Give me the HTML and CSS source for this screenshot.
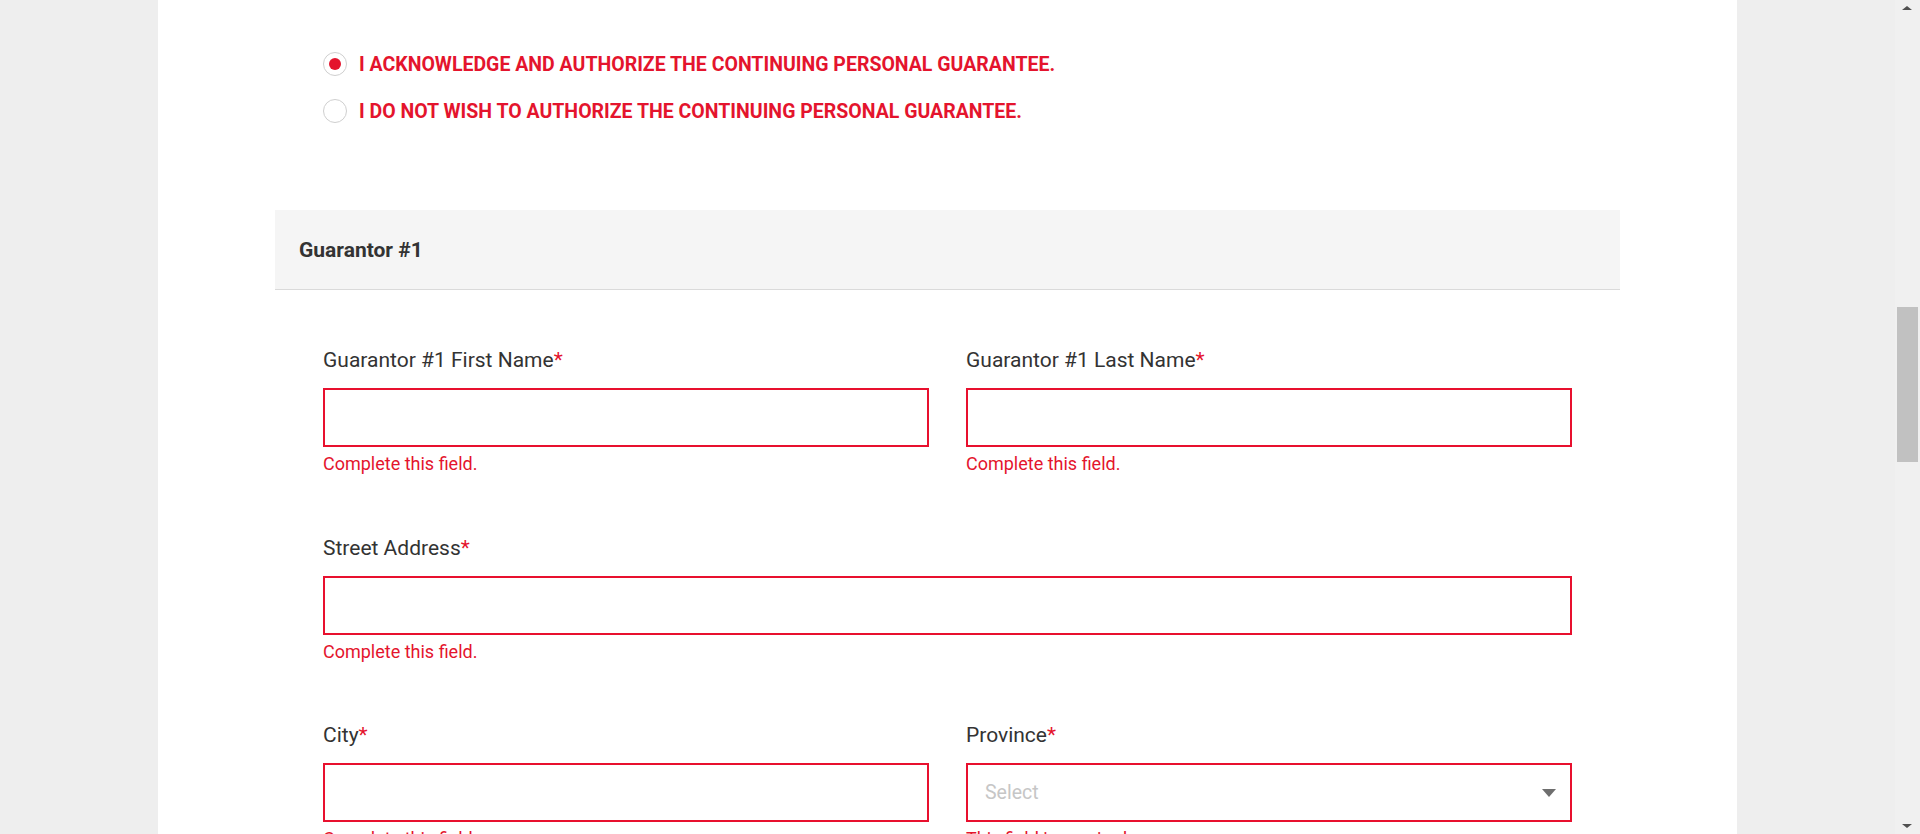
FILE: index.html
```html
<!DOCTYPE html>
<html lang="en">
<head>
<meta charset="utf-8">
<title>Guarantor</title>
<link rel="stylesheet" href="styles.css">
</head>
<body>
<div class="viewport">
  <div class="page">
    <div class="section">
      <div class="radios">
        <label class="radio-row">
          <span class="radio checked"></span>
          <span class="radio-text">I acknowledge and authorize the continuing personal guarantee.</span>
        </label>
        <label class="radio-row">
          <span class="radio"></span>
          <span class="radio-text">I do not wish to authorize the continuing personal guarantee.</span>
        </label>
      </div>

      <div class="panel-head">Guarantor #1</div>

      <div class="panel-body">
        <div class="field">
          <div class="label">Guarantor #1 First Name<span class="req">*</span></div>
          <div class="input"></div>
          <div class="error">Complete this field.</div>
        </div>
        <div class="field">
          <div class="label">Guarantor #1 Last Name<span class="req">*</span></div>
          <div class="input"></div>
          <div class="error">Complete this field.</div>
        </div>
        <div class="field wide">
          <div class="label">Street Address<span class="req">*</span></div>
          <div class="input"></div>
          <div class="error">Complete this field.</div>
        </div>
        <div class="field">
          <div class="label">City<span class="req">*</span></div>
          <div class="input"></div>
          <div class="error">Complete this field.</div>
        </div>
        <div class="field">
          <div class="label">Province<span class="req">*</span></div>
          <div class="input select"><span class="placeholder">Select</span><span class="caret"></span></div>
          <div class="error">This field is required.</div>
        </div>
      </div>
    </div>
  </div>
</div>
<div class="scrollbar">
  <span class="arrow up"></span>
  <span class="thumb"></span>
  <span class="arrow down"></span>
</div>
</body>
</html>
```

FILE: styles.css
```css
html, body {
  margin: 0;
  padding: 0;
  height: 834px;
  overflow: hidden;
}
body {
  background: #eeeeee;
  font-family: Roboto, "Liberation Sans", Arial, sans-serif;
  color: #333333;
}
.viewport {
  margin-right: 25px;
}
.page {
  width: 1579px;
  margin: 0 auto;
  background: #ffffff;
  min-height: 834px;
}
.section {
  margin: 0 117px;
  padding-top: 52px;
}
.radios {
  padding-left: 48px;
  display: flex;
  flex-direction: column;
  gap: 23px;
}
.radio-row {
  display: flex;
  align-items: center;
  gap: 12px;
  height: 24px;
}
.radio {
  width: 24px;
  height: 24px;
  box-sizing: border-box;
  border: 1px solid #cfcfcf;
  border-radius: 50%;
  display: flex;
  align-items: center;
  justify-content: center;
  flex: none;
}
.radio.checked::after {
  content: "";
  width: 12px;
  height: 12px;
  border-radius: 50%;
  background: #e4142d;
}
.radio-text {
  font-size: 19.5px;
  font-weight: 700;
  text-transform: uppercase;
  color: #e4142d;
  line-height: 24px;
  padding-top: 2px;
  white-space: nowrap;
}
.panel-head {
  margin-top: 87px;
  height: 79px;
  background: #f5f5f5;
  border-bottom: 1px solid #dadada;
  display: flex;
  align-items: center;
  padding-left: 24px;
  font-size: 21px;
  font-weight: 700;
  color: #333333;
}
.panel-body {
  padding: 58px 48px 0;
  display: grid;
  grid-template-columns: 1fr 1fr;
  column-gap: 37px;
  row-gap: 61.5px;
}
.field.wide {
  grid-column: 1 / -1;
}
.label {
  font-size: 21px;
  line-height: 24px;
  margin-bottom: 16px;
  color: #333333;
  white-space: nowrap;
}
.req {
  color: #e4142d;
}
.input {
  height: 59px;
  box-sizing: border-box;
  border: 2px solid #e8102e;
  background: #ffffff;
}
.select {
  display: flex;
  align-items: center;
  justify-content: space-between;
  padding: 0 14px 0 17px;
}
.placeholder {
  font-size: 19.5px;
  color: #c6c6c6;
}
.caret {
  width: 0;
  height: 0;
  border-left: 7.5px solid transparent;
  border-right: 7.5px solid transparent;
  border-top: 8px solid #6e6e6e;
}
.error {
  margin-top: 7px;
  font-size: 18px;
  line-height: 20px;
  color: #e4142d;
  white-space: nowrap;
}
.scrollbar {
  position: fixed;
  top: 0;
  right: 0;
  width: 25px;
  height: 834px;
  background: #f0f0f0;
}
.thumb {
  position: absolute;
  left: 2px;
  right: 2px;
  top: 307px;
  height: 155px;
  background: #c1c1c1;
}
.arrow {
  position: absolute;
  left: 7px;
  width: 0;
  height: 0;
  border-left: 5.5px solid transparent;
  border-right: 5.5px solid transparent;
}
.arrow.up {
  top: 6px;
  border-bottom: 4px solid #505050;
}
.arrow.down {
  bottom: 6px;
  border-top: 4px solid #505050;
}
```
